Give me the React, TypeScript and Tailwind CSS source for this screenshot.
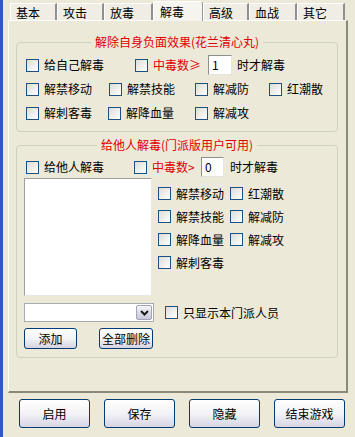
import type { ReactNode } from 'react'

const tabs = [
  { label: '基本', w: 'w-[47px]' },
  { label: '攻击', w: 'w-[47px]' },
  { label: '放毒', w: 'w-[49px]' },
  { label: '解毒', w: 'w-[50px]', active: true },
  { label: '高级', w: 'w-[46px]' },
  { label: '血战', w: 'w-[48px]' },
  { label: '其它', w: 'w-[48px]' },
]

const Box = () => (
  <span className="block w-[13px] h-[13px] shrink-0 border border-[#1C5180] bg-gradient-to-br from-[#DCDCD7] to-white" />
)

const Check = ({ label, red, className = '' }: { label: string; red?: boolean; className?: string }) => (
  <div className={`flex items-center gap-[5px] shrink-0 ${className}`}>
    <Box />
    <span className={red ? 'text-[#E00000]' : 'text-black'}>{label}</span>
  </div>
)

const Edit = ({ value, className = '' }: { value: string; className?: string }) => (
  <div
    className={`h-[20px] bg-white border border-t-[#8E8F8F] border-l-[#8E8F8F] border-b-[#E3E3E3] border-r-[#E3E3E3] pl-[3px] flex items-center shrink-0 ${className}`}
  >
    {value}
  </div>
)

const Btn = ({ children, className = '' }: { children: ReactNode; className?: string }) => (
  <button
    className={`flex items-center justify-center rounded-[3px] border border-[#003C74] bg-gradient-to-b from-white via-[#F3F3F7] to-[#D6D4E2] text-black shrink-0 ${className}`}
  >
    {children}
  </button>
)

const Group = ({ title, className, children }: { title: string; className: string; children: ReactNode }) => (
  <div className={`relative w-[322px] border border-[#D0D0BF] rounded-[4px] ${className}`}>
    <span className="absolute -top-[8px] left-1/2 -translate-x-1/2 px-[4px] bg-[#ECE9D8] text-[#E00000] whitespace-nowrap leading-[14px]">
      {title}
    </span>
    {children}
  </div>
)

export default function App() {
  return (
    <div
      className="w-[355px] h-[437px] flex bg-[#ECE9D8] text-[12px] leading-[14px] overflow-hidden"
      style={{ fontFamily: '"Noto Sans CJK SC", "Noto Sans", sans-serif' }}
    >
      <div className="w-[3px] h-full bg-[#2A5CC0]" />
      <div className="flex flex-col pl-[5px]">
        {/* tabs */}
        <div className="h-[20px] flex items-end pl-[2px]">
          {tabs.map((t) =>
            t.active ? (
              <div
                key={t.label}
                className={`${t.w} h-[20px] -mb-px relative z-10 bg-[#F5F4EE] border-t border-l border-r border-white border-r-[#919B9C] rounded-t-[3px] pl-[6px] pt-[3px]`}
              >
                {t.label}
              </div>
            ) : (
              <div
                key={t.label}
                className={`${t.w} h-[17px] bg-[#EFEDE4] border-t border-l border-white border-r-2 border-r-[#8F8F8F] pl-[5px] pt-[2px]`}
              >
                {t.label}
              </div>
            ),
          )}
        </div>

        {/* panel */}
        <div className="w-[340px] h-[373px] flex flex-col border-t border-l border-white border-r-2 border-b-2 border-r-[#8A8878] border-b-[#8A8878] pl-[7px] pt-[21px]">
          <Group title="解除自身负面效果(花兰清心丸)" className="h-[90px] pt-[10px]">
            <div className="h-[24px] flex items-center pl-[9px]">
              <Check label="给自己解毒" className="w-[109px]" />
              <Check label="中毒数≥" red className="w-[73px]" />
              <Edit value="1" className="w-[24px]" />
              <span className="ml-[5px]">时才解毒</span>
            </div>
            <div className="h-[24px] flex items-center pl-[9px]">
              <Check label="解禁移动" className="w-[83px]" />
              <Check label="解禁技能" className="w-[86px]" />
              <Check label="解减防" className="w-[74px]" />
              <Check label="红潮散" />
            </div>
            <div className="h-[24px] flex items-center pl-[9px]">
              <Check label="解刺客毒" className="w-[82px]" />
              <Check label="解降血量" className="w-[87px]" />
              <Check label="解减攻" />
            </div>
          </Group>

          <Group title="给他人解毒(门派版用户可用)" className="h-[213px] mt-[13px] pt-[10px]">
            <div className="h-[22px] flex items-center pl-[9px]">
              <Check label="给他人解毒" className="w-[108px]" />
              <Check label="中毒数>" red className="w-[67px]" />
              <Edit value="0" className="w-[23px]" />
              <span className="ml-[6px]">时才解毒</span>
            </div>
            <div className="flex pl-[7px]">
              <div className="w-[128px] h-[118px] bg-white border border-t-[#A0A0A0] border-l-[#A0A0A0] border-b-[#E8E8E8] border-r-[#E8E8E8]" />
              <div className="ml-[6px] pt-[4px] flex flex-col">
                <div className="h-[23px] flex items-center">
                  <Check label="解禁移动" className="w-[72px]" />
                  <Check label="红潮散" />
                </div>
                <div className="h-[23px] flex items-center">
                  <Check label="解禁技能" className="w-[72px]" />
                  <Check label="解减防" />
                </div>
                <div className="h-[23px] flex items-center">
                  <Check label="解降血量" className="w-[72px]" />
                  <Check label="解减攻" />
                </div>
                <div className="h-[23px] flex items-center">
                  <Check label="解刺客毒" />
                </div>
              </div>
            </div>
            <div className="flex items-center pl-[7px] mt-[7px]">
              <div className="w-[130px] h-[19px] bg-white border border-[#A5ACB2] flex justify-end items-center pr-px">
                <div className="w-[16px] h-[15px] rounded-[2px] border border-[#A0A4B8] bg-gradient-to-b from-[#F6F6FA] to-[#C8C8D8] flex items-center justify-center">
                  <svg width="9" height="6" viewBox="0 0 9 6">
                    <polyline points="1 1 4.5 4.5 8 1" fill="none" stroke="#1A1A1A" strokeWidth="2" />
                  </svg>
                </div>
              </div>
              <Check label="只显示本门派人员" className="ml-[11px]" />
            </div>
            <div className="flex items-center pl-[7px] mt-[6px]">
              <Btn className="w-[53px] h-[21px]">添加</Btn>
              <Btn className="w-[54px] h-[21px] ml-[22px]">全部删除</Btn>
            </div>
          </Group>
        </div>

        {/* bottom buttons */}
        <div className="flex items-center pl-[11px] mt-[6px] gap-[14px]">
          <Btn className="w-[71px] h-[29px]">启用</Btn>
          <Btn className="w-[71px] h-[29px]">保存</Btn>
          <Btn className="w-[71px] h-[29px]">隐藏</Btn>
          <Btn className="w-[71px] h-[29px]">结束游戏</Btn>
        </div>
      </div>
    </div>
  )
}
